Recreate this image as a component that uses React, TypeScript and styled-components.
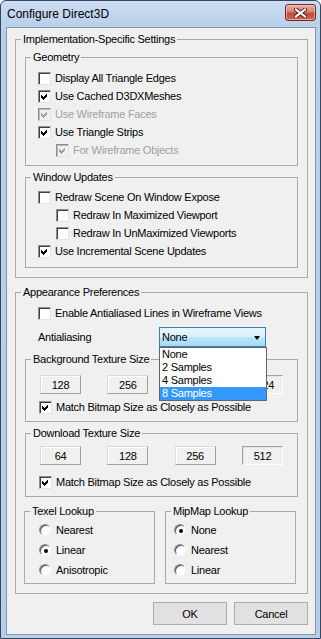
import * as React from 'react';
import styled, { createGlobalStyle } from 'styled-components';

const GlobalStyle = createGlobalStyle`
  html, body {
    margin: 0;
    padding: 0;
    background: #fff;
  }
  body {
    font-family: "Liberation Sans", Arial, sans-serif;
    font-size: 11px;
    letter-spacing: -0.25px;
    color: #000;
  }
`;

const Window = styled.div`
  width: 321px;
  height: 639px;
  box-sizing: border-box;
  border: 1px solid #34475e;
  border-radius: 6px 6px 0 0;
  background: linear-gradient(#cadcf1, #b9d0ea 26px, #b7cee9);
  display: flex;
  flex-direction: column;
`;

const TitleBar = styled.div`
  height: 26px;
  display: flex;
  justify-content: space-between;
  padding: 0 4px 0 6px;
`;

const Title = styled.span`
  font-size: 12px;
  letter-spacing: 0;
  line-height: 26px;
`;

const CloseButton = styled.div`
  width: 31px;
  height: 17px;
  margin-top: 3px;
  box-sizing: border-box;
  border: 1px solid #6f2b24;
  border-radius: 3px;
  background: linear-gradient(#eab3a5, #d9806f 45%, #c2493a 55%, #cf6a55);
  box-shadow: inset 0 0 0 1px rgba(255, 220, 210, 0.5);
  display: flex;
  align-items: center;
  justify-content: center;
`;

const Client = styled.div`
  flex: 1;
  margin: 0 4px 3px 5px;
  border: 1px solid #8296ad;
  background: #f0f0f0;
  padding: 5px 7px 0 8px;
  display: flex;
  flex-direction: column;
`;

const Group = styled.fieldset<{ $top?: number }>`
  margin: ${p => p.$top ?? 0}px 0 0 0;
  padding: 0;
  border: 1px solid #a9a9a9;
  min-width: 0;
`;

const Caption = styled.legend`
  margin-left: 5px;
  padding: 0 2px;
  font-size: 11px;
  line-height: 13px;
`;

const Body = styled.div<{ $top: number; $bottom: number; $left: number; $right?: number }>`
  display: flex;
  flex-direction: column;
  padding: ${p => p.$top}px ${p => p.$right ?? 0}px ${p => p.$bottom}px ${p => p.$left}px;
`;

const CheckRow = styled.div<{ $indent?: number; $disabled?: boolean; $top?: number }>`
  display: flex;
  align-items: center;
  gap: 4px;
  height: 18px;
  margin-top: ${p => p.$top ?? 0}px;
  padding-left: ${p => p.$indent ?? 0}px;
  color: ${p => (p.$disabled ? '#a0a0a0' : '#000')};
  white-space: nowrap;
`;

const Box = styled.span<{ $disabled?: boolean }>`
  width: 13px;
  height: 13px;
  box-sizing: border-box;
  border: 1px solid;
  border-color: #8e8e8e #e3e3e3 #e3e3e3 #8e8e8e;
  box-shadow: inset 1px 1px 0 ${p => (p.$disabled ? '#b8b8b8' : '#404040')};
  background: ${p => (p.$disabled ? '#f0f0f0' : '#fff')};
  display: flex;
  align-items: center;
  justify-content: center;
  flex: none;
`;

const RadioRow = styled.div`
  display: flex;
  align-items: center;
  gap: 5px;
  height: 20px;
`;

const RadioDot = styled.span`
  width: 12px;
  height: 12px;
  box-sizing: border-box;
  border-radius: 50%;
  border: 1px solid;
  border-color: #8e8e8e #f8f8f8 #f8f8f8 #8e8e8e;
  box-shadow: inset 1px 1px 0 #505050;
  background: #fff;
  display: flex;
  align-items: center;
  justify-content: center;
  flex: none;
`;

const Pip = styled.span`
  width: 4px;
  height: 4px;
  border-radius: 50%;
  background: #000;
  margin: 1px 0 0 1px;
`;

const ComboRow = styled.div`
  display: flex;
  align-items: center;
  height: 20px;
  margin-top: 5px;
  padding-left: 22px;
`;

const ComboLabel = styled.span`
  width: 121px;
`;

const Combo = styled.div`
  position: relative;
  width: 107px;
  height: 20px;
  box-sizing: border-box;
  border: 1px solid #3c7fb1;
  background: linear-gradient(#eaf6fd, #d9f0fc 50%, #bee6fd 50%, #a7d9f5);
  display: flex;
  align-items: center;
  justify-content: space-between;
  padding: 0 5px 0 2px;
`;

const Arrow = styled.span`
  width: 0;
  height: 0;
  border-left: 3.5px solid transparent;
  border-right: 3.5px solid transparent;
  border-top: 4px solid #000;
  margin-top: 1px;
`;

const List = styled.div`
  position: absolute;
  left: -1px;
  top: 19px;
  width: 108px;
  box-sizing: border-box;
  border: 1px solid #646464;
  background: #fff;
  z-index: 5;
`;

const Item = styled.div<{ $active?: boolean }>`
  height: 13px;
  line-height: 13px;
  padding-left: 2px;
  background: ${p => (p.$active ? '#3399ff' : 'transparent')};
  color: ${p => (p.$active ? '#fff' : '#000')};
`;

const SizeRow = styled.div<{ $top: number }>`
  display: flex;
  justify-content: space-between;
  padding: ${p => p.$top}px 14px 0 14px;
`;

const SizeButton = styled.div<{ $sunken?: boolean }>`
  width: 41px;
  height: 19px;
  box-sizing: border-box;
  border: 1px solid;
  border-color: ${p => (p.$sunken ? '#a0a0a0 #ffffff #ffffff #a0a0a0' : '#dcdcdc #a0a0a0 #a0a0a0 #dcdcdc')};
  box-shadow: ${p => (p.$sunken ? 'inset 1px 1px 0 #e3e3e3' : 'inset 1px 1px 0 #fff')};
  background: #f0f0f0;
  display: flex;
  align-items: center;
  justify-content: center;
`;

const LookupGrid = styled.div`
  display: grid;
  grid-template-columns: 131px 131px;
  gap: 10px;
  margin: 8px 0 0 8px;
`;

const Footer = styled.div`
  display: flex;
  justify-content: flex-end;
  gap: 7px;
  margin-top: 8px;
`;

const DialogButton = styled.div`
  width: 74px;
  height: 23px;
  box-sizing: border-box;
  border: 1px solid #adadad;
  background: #e1e1e1;
  display: flex;
  align-items: center;
  justify-content: center;
`;

function Check({ disabled }: { disabled?: boolean }) {
  return (
    <svg width="7" height="7" viewBox="0 0 7 7" shapeRendering="crispEdges">
      <polygon points="0,2 2,4 6,0 6,3 2,7 0,5" fill={disabled ? '#a0a0a0' : '#000'} />
    </svg>
  );
}

function CheckBox(props: { label: string; checked?: boolean; disabled?: boolean; indent?: number; top?: number }) {
  return (
    <CheckRow $indent={props.indent} $disabled={props.disabled} $top={props.top}>
      <Box $disabled={props.disabled}>{props.checked && <Check disabled={props.disabled} />}</Box>
      <span>{props.label}</span>
    </CheckRow>
  );
}

function RadioGroup({ title, items, selected, left }: { title: string; items: string[]; selected: number; left: number }) {
  return (
    <Group>
      <Caption>{title}</Caption>
      <Body $top={2} $bottom={3} $left={left}>
        {items.map((it, i) => (
          <RadioRow key={it}>
            <RadioDot>{i === selected && <Pip />}</RadioDot>
            <span>{it}</span>
          </RadioRow>
        ))}
      </Body>
    </Group>
  );
}

function SizeGroup({ title, sizes, top, checkTop, bottomPad, gapTop }: {
  title: string; sizes: string[]; top: number; checkTop: number; bottomPad: number; gapTop: number
}) {
  return (
    <Group $top={gapTop}>
      <Caption>{title}</Caption>
      <Body $top={0} $bottom={bottomPad} $left={0}>
        <SizeRow $top={top}>
          {sizes.map((s, i) => (
            <SizeButton key={s} $sunken={i === sizes.length - 1}>{s}</SizeButton>
          ))}
        </SizeRow>
        <CheckBox label="Match Bitmap Size as Closely as Possible" checked indent={13} top={checkTop} />
      </Body>
    </Group>
  );
}

export default function App() {
  return (
    <>
      <GlobalStyle />
      <Window>
        <TitleBar>
          <Title>Configure Direct3D</Title>
          <CloseButton>
            <svg width="13" height="10" viewBox="0 0 13 10">
              <path d="M2 1.5 L11 8.5 M11 1.5 L2 8.5" stroke="#4a1a14" strokeWidth="4" strokeLinecap="square" />
              <path d="M2 1.5 L11 8.5 M11 1.5 L2 8.5" stroke="#fff" strokeWidth="2.2" strokeLinecap="square" />
            </svg>
          </CloseButton>
        </TitleBar>
        <Client>
          <Group>
            <Caption>Implementation-Specific Settings</Caption>
            <Body $top={5} $bottom={9} $left={9} $right={9}>
              <Group>
                <Caption>Geometry</Caption>
                <Body $top={5} $bottom={6} $left={12}>
                  <CheckBox label="Display All Triangle Edges" />
                  <CheckBox label="Use Cached D3DXMeshes" checked />
                  <CheckBox label="Use Wireframe Faces" checked disabled />
                  <CheckBox label="Use Triangle Strips" checked />
                  <CheckBox label="For Wireframe Objects" checked disabled indent={18} />
                </Body>
              </Group>
              <Group $top={5}>
                <Caption>Window Updates</Caption>
                <Body $top={4} $bottom={7} $left={12}>
                  <CheckBox label="Redraw Scene On Window Expose" />
                  <CheckBox label="Redraw In Maximized Viewport" indent={18} />
                  <CheckBox label="Redraw In UnMaximized Viewports" indent={18} />
                  <CheckBox label="Use Incremental Scene Updates" checked />
                </Body>
              </Group>
            </Body>
          </Group>

          <Group $top={8}>
            <Caption>Appearance Preferences</Caption>
            <Body $top={5} $bottom={9} $left={0}>
              <CheckBox label="Enable Antialiased Lines in Wireframe Views" indent={22} />
              <ComboRow>
                <ComboLabel>Antialiasing</ComboLabel>
                <Combo>
                  <span>None</span>
                  <Arrow />
                  <List>
                    <Item>None</Item>
                    <Item>2 Samples</Item>
                    <Item>4 Samples</Item>
                    <Item $active>8 Samples</Item>
                  </List>
                </Combo>
              </ComboRow>
              <Body $top={0} $bottom={0} $left={9} $right={9}>
                <SizeGroup title="Background Texture Size" sizes={['128', '256', '512', '1024']} top={9} checkTop={4} bottomPad={5} gapTop={6} />
                <SizeGroup title="Download Texture Size" sizes={['64', '128', '256', '512']} top={6} checkTop={8} bottomPad={5} gapTop={5} />
              </Body>
              <LookupGrid>
                <RadioGroup title="Texel Lookup" items={['Nearest', 'Linear', 'Anisotropic']} selected={1} left={14} />
                <RadioGroup title="MipMap Lookup" items={['None', 'Nearest', 'Linear']} selected={0} left={8} />
              </LookupGrid>
            </Body>
          </Group>

          <Footer>
            <DialogButton>OK</DialogButton>
            <DialogButton>Cancel</DialogButton>
          </Footer>
        </Client>
      </Window>
    </>
  );
}
